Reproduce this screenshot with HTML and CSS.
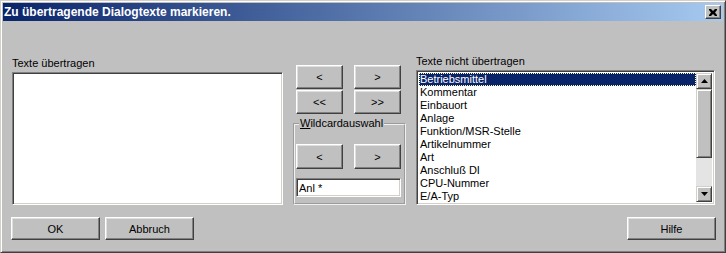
FILE: index.html
```html
<!DOCTYPE html>
<html lang="de">
<head>
    <meta charset="UTF-8">
    <title>Zu übertragende Dialogtexte markieren.</title>
    <link rel="stylesheet" href="styles.css">
</head>
<body>
    <div class="window">
        <div class="title-bar">
            <span class="title-text">Zu übertragende Dialogtexte markieren.</span>
            <button class="close-button">
                <svg viewBox="0 0 8 7" width="8" height="7">
                    <path d="M0 0h2l2 2 2-2h2v1L6 3.5 8 6v1H6L4 5 2 7H0V6l2-2.5L0 1z" fill="#000"></path>
                </svg>
            </button>
        </div>
        <div class="content">
            <div class="main-row">
                <div class="column left-column">
                    <div class="label">Texte übertragen</div>
                    <div class="list left-list"></div>
                </div>
                <div class="column middle-column">
                    <div class="button-row">
                        <button class="btn small">&lt;</button>
                        <button class="btn small">&gt;</button>
                    </div>
                    <div class="button-row">
                        <button class="btn small">&lt;&lt;</button>
                        <button class="btn small">&gt;&gt;</button>
                    </div>
                    <fieldset class="group">
                        <legend><u>W</u>ildcardauswahl</legend>
                        <div class="button-row">
                            <button class="btn small tall">&lt;</button>
                            <button class="btn small tall">&gt;</button>
                        </div>
                        <input class="text-input" type="text" value="Anl *">
                    </fieldset>
                </div>
                <div class="column right-column">
                    <div class="label">Texte nicht übertragen</div>
                    <div class="list right-list">
                        <div class="items">
                            <div class="item selected">Betriebsmittel</div>
                            <div class="item">Kommentar</div>
                            <div class="item">Einbauort</div>
                            <div class="item">Anlage</div>
                            <div class="item">Funktion/MSR-Stelle</div>
                            <div class="item">Artikelnummer</div>
                            <div class="item">Art</div>
                            <div class="item">Anschluß DI</div>
                            <div class="item">CPU-Nummer</div>
                            <div class="item">E/A-Typ</div>
                        </div>
                        <div class="scrollbar">
                            <div class="scroll-btn">
                                <svg viewBox="0 0 7 4" width="7" height="4"><path d="M3.5 0L7 4H0z" fill="#000"></path></svg>
                            </div>
                            <div class="scroll-thumb"></div>
                            <div class="scroll-track"></div>
                            <div class="scroll-btn">
                                <svg viewBox="0 0 7 4" width="7" height="4"><path d="M0 0h7L3.5 4z" fill="#000"></path></svg>
                            </div>
                        </div>
                    </div>
                </div>
            </div>
            <div class="footer">
                <button class="btn wide">OK</button>
                <button class="btn wide">Abbruch</button>
                <button class="btn wide help">Hilfe</button>
            </div>
        </div>
    </div>
</body>
</html>
```

FILE: styles.css
```css
* {
    margin: 0;
    padding: 0;
    box-sizing: border-box;
}

body {
    width: 726px;
    height: 253px;
    background-color: #c0c0c0;
    font-family: 'Liberation Sans', Arial, sans-serif;
    font-size: 11px;
    color: #000;
    overflow: hidden;
}

.window {
    width: 726px;
    height: 253px;
    background-color: #c0c0c0;
    border: 1px solid;
    border-color: #d4d0c8 #404040 #404040 #d4d0c8;
    box-shadow: inset 1px 1px #fff, inset -1px -1px #808080;
    padding: 2px;
}

.title-bar {
    height: 18px;
    background: linear-gradient(to right, #0a246a, #a6caf0);
    display: flex;
    align-items: center;
    justify-content: space-between;
    padding: 0 2px 0 1px;
}

.title-text {
    color: #fff;
    font-family: 'Liberation Sans', Arial, sans-serif;
    font-weight: bold;
    font-size: 12px;
}

.close-button {
    width: 16px;
    height: 14px;
    background-color: #c0c0c0;
    border: 1px solid;
    border-color: #fff #404040 #404040 #fff;
    box-shadow: inset -1px -1px #808080;
    display: flex;
    justify-content: center;
    align-items: center;
}

.content {
    padding: 0 8px;
}

.main-row {
    display: flex;
    height: 150px;
    margin-top: 34px;
    padding-left: 1px;
    gap: 10px;
}

.column {
    display: flex;
    flex-direction: column;
    justify-content: flex-end;
}

.label {
    line-height: 13px;
    margin-bottom: 2px;
}

.left-column {
    width: 271px;
}

.right-column {
    width: 299px;
}

.list {
    background-color: #fff;
    border: 1px solid;
    border-color: #808080 #fff #fff #808080;
    box-shadow: inset 1px 1px #404040, inset -1px -1px #d4d0c8;
}

.left-list {
    height: 133px;
}

.right-list {
    height: 135px;
    padding: 2px;
    display: flex;
}

.items {
    flex: 1;
    overflow: hidden;
}

.item {
    height: 13px;
    line-height: 13px;
    padding-left: 1px;
    white-space: nowrap;
}

.item.selected {
    background-color: #0a246a;
    color: #fff;
    outline: 1px dotted #ffffc0;
    outline-offset: -1px;
}

.scrollbar {
    width: 16px;
    display: flex;
    flex-direction: column;
    background-color: #e0e0e0;
}

.scroll-btn {
    height: 16px;
    background-color: #c0c0c0;
    border: 1px solid;
    border-color: #d4d0c8 #404040 #404040 #d4d0c8;
    box-shadow: inset 1px 1px #fff, inset -1px -1px #808080;
    display: flex;
    justify-content: center;
    align-items: center;
}

.scroll-thumb {
    height: 69px;
    background-color: #c0c0c0;
    border: 1px solid;
    border-color: #d4d0c8 #404040 #404040 #d4d0c8;
    box-shadow: inset 1px 1px #fff, inset -1px -1px #808080;
}

.scroll-track {
    flex: 1;
    background-color: #e4e4e4;
}

.middle-column {
    width: 113px;
    padding-top: 10px;
    justify-content: flex-start;
}

.button-row {
    display: flex;
    gap: 11px;
    padding-left: 3px;
    margin-bottom: 1px;
}

.btn {
    background-color: #c0c0c0;
    font-family: 'Liberation Sans', Arial, sans-serif;
    font-size: 11px;
    color: #000;
    border: 1px solid;
    border-color: #fff #404040 #404040 #fff;
    box-shadow: inset -1px -1px #808080, inset 1px 1px #dfdfdf;
}

.btn.small {
    width: 47px;
    height: 24px;
}

.btn.tall {
    height: 25px;
}

.group {
    height: 88px;
    margin-top: 2px;
    border: 2px groove #f0f0f0;
    padding: 14px 3px 0 1px;
}

.group legend {
    line-height: 13px;
    padding: 0 1px;
    margin-left: 3px;
}

.group .button-row {
    padding-left: 0;
}

.text-input {
    display: block;
    width: 105px;
    height: 19px;
    margin-top: 9px;
    background-color: #fff;
    font-family: 'Liberation Sans', Arial, sans-serif;
    font-size: 11px;
    padding-left: 2px;
    border: 1px solid;
    border-color: #808080 #fff #fff #808080;
    box-shadow: inset 1px 1px #404040, inset -1px -1px #d4d0c8;
    outline: none;
}

.footer {
    display: flex;
    gap: 5px;
    margin-top: 12px;
}

.btn.wide {
    width: 89px;
    height: 23px;
}

.btn.help {
    margin-left: auto;
    margin-right: -1px;
}
```
